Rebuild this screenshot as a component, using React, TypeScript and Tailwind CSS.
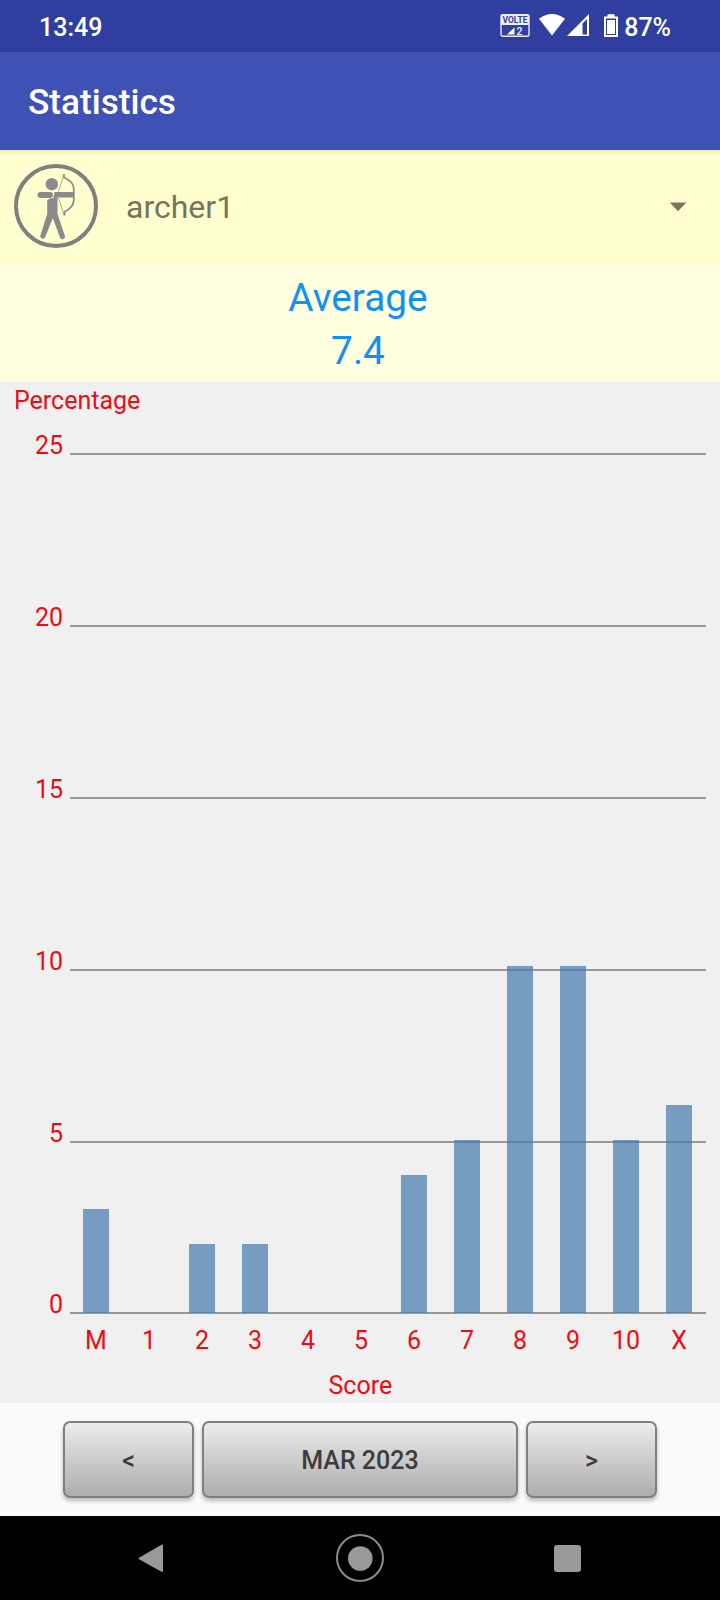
const AXIS_BASE = 931;
const TICK_STEP = 171.8;
const PERCENT_STEP = 34.7;

const ticks = [0, 5, 10, 15, 20, 25];

const scores = [
  { label: 'M', value: 3 },
  { label: '1', value: 0 },
  { label: '2', value: 2 },
  { label: '3', value: 2 },
  { label: '4', value: 0 },
  { label: '5', value: 0 },
  { label: '6', value: 4 },
  { label: '7', value: 5 },
  { label: '8', value: 10 },
  { label: '9', value: 10 },
  { label: '10', value: 5 },
  { label: 'X', value: 6 },
];

function StatusBar() {
  return (
    <div className="flex h-[52px] items-center justify-between bg-[#303f9f] pl-[39px] pr-[49px] text-[25px] font-medium text-white">
      <span className="pt-[3px]">13:49</span>
      <div className="flex items-center">
        <svg width="119" height="28" viewBox="0 0 119 28" className="mr-[5px]">
          <rect x="1" y="2.700" width="28" height="21.600" rx="2" fill="none" stroke="#e8eafa" strokeWidth="1.400" />
          <path d="M1 4.500Q1 2.500 3 2.500H27Q29 2.500 29 4.500V13H1Z" fill="#eef0fc" />
          <text x="15" y="11.200" textAnchor="middle" textLength="25" lengthAdjust="spacingAndGlyphs" fontSize="9" fontWeight="700" fill="#303f9f">VOLTE</text>
          <path d="M7 22.500 14.500 15.500V22.500Z" fill="#fff" />
          <text x="16.500" y="22.700" fontSize="10.500" fontWeight="500" fill="#f2f3ff">2</text>
          <path d="M39 6.800C47 .5 57 .5 65 6.800L52 23.500Z" fill="#fff" />
          <path d="M67 24 89 2V24ZM82.500 11.500V22.500H87V7Z" fill="#fff" fillRule="evenodd" />
          <path d="M107.500 2.200h7V4.500h3.500V25h-14V4.500h3.500ZM106 6.500V23h10V6.500Z" fill="#fff" fillRule="evenodd" />
          <rect x="107" y="8" width="8" height="14" fill="#fff" />
        </svg>
        <span className="pt-[3px]">87%</span>
      </div>
    </div>
  );
}

function ArcherIcon() {
  return (
    <svg width="84" height="84" viewBox="0 0 84 84" className="mb-[2px] shrink-0">
      <circle cx="42" cy="42" r="40" fill="none" stroke="#808080" strokeWidth="4" />
      <circle cx="37.800" cy="20.200" r="6.200" fill="#8b8b8b" />
      <path d="M26.500 31H36" stroke="#8b8b8b" strokeWidth="6" strokeLinecap="round" />
      <path d="M40.500 28H60V33.500H43.500V50L50.800 71.500A2.600 2.600 0 0 1 46 73.500L38.800 54 31.300 73A2.600 2.600 0 0 1 26.500 71L33.200 50V36L36 34.500 39.500 34Z" fill="#8b8b8b" />
      <path d="M50 10.500 44.500 27.500M44.500 34 50 51" stroke="#98987e" strokeWidth=".8" fill="none" />
      <path d="M50 10V13.500C56 16 59.800 20 59.800 25V36C59.800 41 56 45 50.500 48V51.500" stroke="#8c8c84" strokeWidth="1.800" fill="none" />
    </svg>
  );
}

function Chart() {
  return (
    <svg width="720" height="1021" viewBox="0 0 720 1021" className="block bg-[#f0f0f0]" fontSize="25" fill="#ee0c12">
      <text x="14" y="27.300">Percentage</text>
      {ticks.map((t) => {
        const y = Math.ceil(AXIS_BASE - (t / 5) * TICK_STEP);
        return (
          <g key={t}>
            <rect x="70" y={y - 1} width="636" height="2" fill="#999999" />
            <text x="63" y={y} textAnchor="end">{t}</text>
          </g>
        );
      })}
      {scores.map((s, i) => {
        const height = Math.floor(s.value * PERCENT_STEP);
        return (
          <g key={s.label}>
            <rect x={83 + i * 53} y={AXIS_BASE - height} width="26" height={height} fill="#4178ac" fillOpacity="0.7" />
            <text x={96 + i * 53} y="967" textAnchor="middle">{s.label}</text>
          </g>
        );
      })}
      <text x="360.300" y="1012" textAnchor="middle">Score</text>
    </svg>
  );
}

function MonthButton({ label, wide = false }: { label: string; wide?: boolean }) {
  return (
    <button
      className={`${wide ? 'w-[316px]' : 'w-[131px]'} h-[77px] rounded-[7px] border-2 border-[#808080] bg-linear-to-b from-[#ececec] to-[#adadad] pt-[2px] text-[25px] font-medium text-[#3c3c3c] shadow-[0_3px_4px_rgba(0,0,0,0.26)]`}
    >
      {label}
    </button>
  );
}

function NavigationBar() {
  return (
    <div className="flex h-[84px] items-center justify-between bg-black pl-[137px] pr-[139px]">
      <svg width="28" height="30" viewBox="0 0 28 30">
        <path d="M2.500 15.500 25 2.500V28Z" fill="#999" stroke="#999" strokeWidth="2" strokeLinejoin="round" />
      </svg>
      <svg width="50" height="50" viewBox="0 0 50 50">
        <circle cx="25" cy="25" r="23" fill="none" stroke="#8c8c8c" strokeWidth="2" />
        <circle cx="25.300" cy="25.500" r="12.300" fill="#999" />
      </svg>
      <div className="mt-[1px] h-[27px] w-[27px] rounded-[3px] bg-[#999999]" />
    </div>
  );
}

export default function App() {
  return (
    <div className="flex h-[1600px] w-[720px] flex-col overflow-hidden bg-[#fafafa] font-['Roboto',sans-serif]">
      <StatusBar />
      <header className="flex h-[98px] items-center bg-[#3f51b5] pl-7 pt-[3px]">
        <h1 className="text-[35.200px] leading-[53px] font-medium text-white">Statistics</h1>
      </header>
      <div className="flex h-[113px] items-center bg-[#ffffcf] bg-linear-to-b from-[#efefbc] from-0% to-[#ffffcf] to-[6px] pl-[14px] pr-[33px]">
        <ArcherIcon />
        <span className="ml-7 grow text-[32px] text-[#757558]">archer1</span>
        <svg width="18" height="10" viewBox="0 0 18 10">
          <path d="M.7.500H17.300L9 9.300Z" fill="#76765e" />
        </svg>
      </div>
      <div className="flex h-[119px] flex-col items-center bg-[#ffffdf] pt-[8px] pr-[4px] text-[38.800px] leading-[53px] text-[#1191f2]">
        <span>Average</span>
        <span>7.4</span>
      </div>
      <Chart />
      <div className="flex h-[113px] items-start justify-center gap-2 pt-[18px]">
        <MonthButton label="<" />
        <MonthButton label="MAR 2023" wide />
        <MonthButton label=">" />
      </div>
      <NavigationBar />
    </div>
  );
}
